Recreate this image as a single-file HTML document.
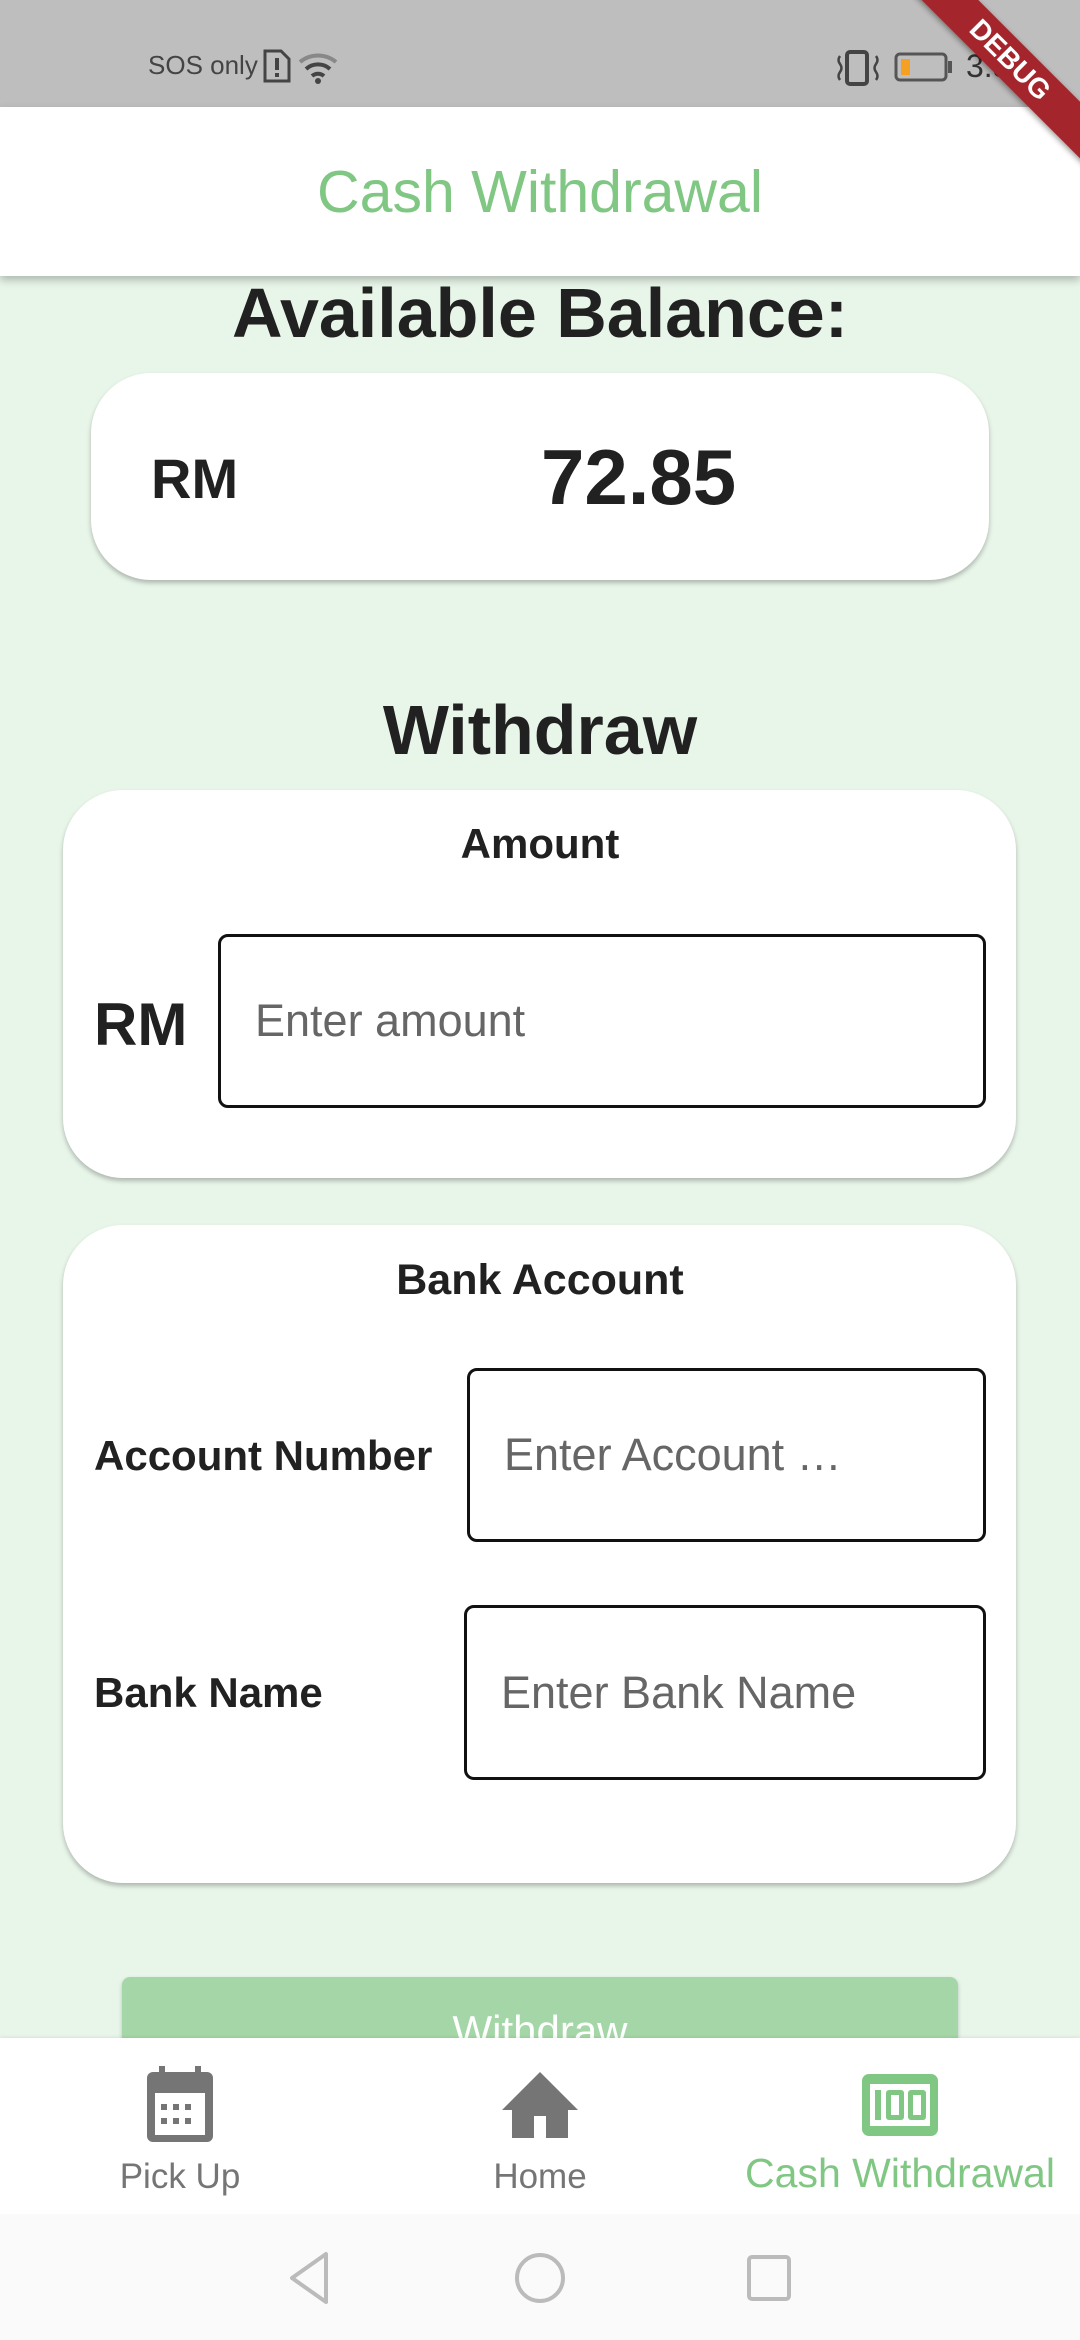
<!DOCTYPE html>
<html><head><meta charset="utf-8"><style>
*{margin:0;padding:0;box-sizing:border-box}
body{width:1080px;height:2340px;overflow:hidden;background:#e8f5e9;font-family:"Liberation Sans",sans-serif;position:relative;color:#212121}
.abs{position:absolute}
.card{position:absolute;background:#fff;border-radius:60px;box-shadow:0 3px 5px rgba(0,0,0,.25)}
.inp{position:absolute;border:3px solid #111;border-radius:10px;background:#fff;color:#666;font-size:45px;display:flex;align-items:center;padding-left:34px}
.c{text-align:center}
.b{font-weight:bold}
</style></head><body>
<div class="abs" style="left:0;top:0;width:1080px;height:107px;background:#bebebe"></div>
<div class="abs" style="left:148px;top:50px;font-size:26px;color:#444">SOS only</div>
<svg class="abs" style="left:262px;top:48px" width="30" height="36"><path d="M3 3h16l8 8v22H3z" fill="none" stroke="#444" stroke-width="3"/><rect x="13" y="10" width="4" height="12" fill="#444"/><rect x="13" y="25" width="4" height="4" fill="#444"/></svg>
<svg class="abs" style="left:298px;top:50px" width="42" height="34"><path d="M2 12a28 28 0 0 1 36 0" fill="none" stroke="#888" stroke-width="4"/><path d="M8 19a18 18 0 0 1 24 0" fill="none" stroke="#444" stroke-width="4"/><path d="M14 26a9 9 0 0 1 12 0" fill="none" stroke="#444" stroke-width="4"/><circle cx="20" cy="31" r="3" fill="#444"/></svg>
<svg class="abs" style="left:836px;top:50px" width="44" height="36"><rect x="11" y="2" width="20" height="32" rx="3" fill="none" stroke="#444" stroke-width="4"/><path d="M4 6q-3 4 0 8t0 8 0 8M40 6q3 4 0 8t0 8 0 8" fill="none" stroke="#444" stroke-width="2.5"/></svg>
<svg class="abs" style="left:894px;top:52px" width="60" height="30"><rect x="2" y="2" width="50" height="26" rx="4" fill="none" stroke="#555" stroke-width="3"/><rect x="7" y="7" width="9" height="16" fill="#f5a020"/><rect x="54" y="9" width="4" height="12" fill="#555"/></svg>
<div class="abs" style="left:966px;top:48px;font-size:32px;color:#333">3:52</div>
<div class="abs" style="left:0;top:107px;width:1080px;height:169px;background:#fff;box-shadow:0 4px 8px rgba(0,0,0,.25)"></div>
<div class="abs c" style="left:0;top:158px;width:1080px;font-size:59px;color:#81c784">Cash Withdrawal</div>
<div class="abs" style="left:875px;top:40px;width:270px;height:40px;background:#a4262c;transform:rotate(45deg);color:#fff;font-size:28px;font-weight:bold;text-align:center;line-height:40px;box-shadow:0 2px 6px rgba(0,0,0,.4)">DEBUG</div>
<div class="abs c b" style="left:0;top:273px;width:1080px;font-size:70px">Available Balance:</div>
<div class="card" style="left:91px;top:373px;width:898px;height:207px"></div>
<div class="abs b" style="left:151px;top:446px;font-size:56px">RM</div>
<div class="abs b" style="left:541px;top:432px;font-size:78px">72.85</div>
<div class="abs c b" style="left:0;top:690px;width:1080px;font-size:70px">Withdraw</div>
<div class="card" style="left:63px;top:790px;width:953px;height:388px"></div>
<div class="abs c b" style="left:0;top:820px;width:1080px;font-size:42px">Amount</div>
<div class="abs b" style="left:94px;top:990px;font-size:60px">RM</div>
<div class="inp" style="left:218px;top:934px;width:768px;height:174px">Enter amount</div>
<div class="card" style="left:63px;top:1225px;width:953px;height:658px"></div>
<div class="abs c b" style="left:0;top:1256px;width:1080px;font-size:43px">Bank Account</div>
<div class="abs b" style="left:94px;top:1432px;font-size:42px">Account Number</div>
<div class="inp" style="left:467px;top:1368px;width:519px;height:174px">Enter Account …</div>
<div class="abs b" style="left:94px;top:1669px;font-size:42px">Bank Name</div>
<div class="inp" style="left:464px;top:1605px;width:522px;height:175px">Enter Bank Name</div>
<div class="abs" style="left:122px;top:1977px;width:836px;height:120px;background:#a5d6a7;border-radius:8px;box-shadow:0 2px 4px rgba(0,0,0,.2);color:#fff;font-size:42px;text-align:center;padding-top:30px">Withdraw</div>
<div class="abs" style="left:0;top:2038px;width:1080px;height:176px;background:#fff;box-shadow:0 -1px 3px rgba(0,0,0,.08)"></div>
<svg class="abs" style="left:145px;top:2066px" width="70" height="78"><rect x="2" y="6" width="66" height="70" rx="6" fill="#757575"/><rect x="10" y="27" width="50" height="42" fill="#fff"/><rect x="14" y="0" width="6" height="12" fill="#757575"/><rect x="50" y="0" width="6" height="12" fill="#757575"/><g fill="#757575"><rect x="16" y="38" width="6" height="6"/><rect x="28" y="38" width="6" height="6"/><rect x="40" y="38" width="6" height="6"/><rect x="16" y="52" width="6" height="6"/><rect x="28" y="52" width="6" height="6"/><rect x="40" y="52" width="6" height="6"/></g></svg>
<svg class="abs" style="left:502px;top:2072px" width="76" height="66"><path d="M38 0L0 38h10v28h22V44h12v22h22V38h10z" fill="#757575"/></svg>
<svg class="abs" style="left:862px;top:2074px" width="76" height="62"><rect x="0" y="0" width="76" height="62" rx="7" fill="#81c784"/><rect x="8" y="10" width="60" height="42" fill="#fff"/><rect x="13" y="16" width="6" height="30" fill="#81c784"/><rect x="24" y="16" width="18" height="30" rx="3" fill="#81c784"/><rect x="29" y="21" width="8" height="20" fill="#fff"/><rect x="46" y="16" width="18" height="30" rx="3" fill="#81c784"/><rect x="51" y="21" width="8" height="20" fill="#fff"/></svg>
<div class="abs c" style="left:60px;top:2157px;width:240px;font-size:35px;color:#757575">Pick Up</div>
<div class="abs c" style="left:420px;top:2157px;width:240px;font-size:35px;color:#757575">Home</div>
<div class="abs c" style="left:720px;top:2150px;width:360px;font-size:41px;color:#81c784">Cash Withdrawal</div>
<div class="abs" style="left:0;top:2214px;width:1080px;height:126px;background:#fafafa"></div>
<svg class="abs" style="left:284px;top:2250px" width="50" height="56"><path d="M42 4v48L8 28z" fill="none" stroke="#bbb" stroke-width="4" stroke-linejoin="round"/></svg>
<svg class="abs" style="left:514px;top:2252px" width="52" height="52"><circle cx="26" cy="26" r="23" fill="none" stroke="#bbb" stroke-width="4"/></svg>
<svg class="abs" style="left:746px;top:2254px" width="46" height="48"><rect x="3" y="3" width="40" height="42" rx="3" fill="none" stroke="#bbb" stroke-width="4"/></svg>
</body></html>
